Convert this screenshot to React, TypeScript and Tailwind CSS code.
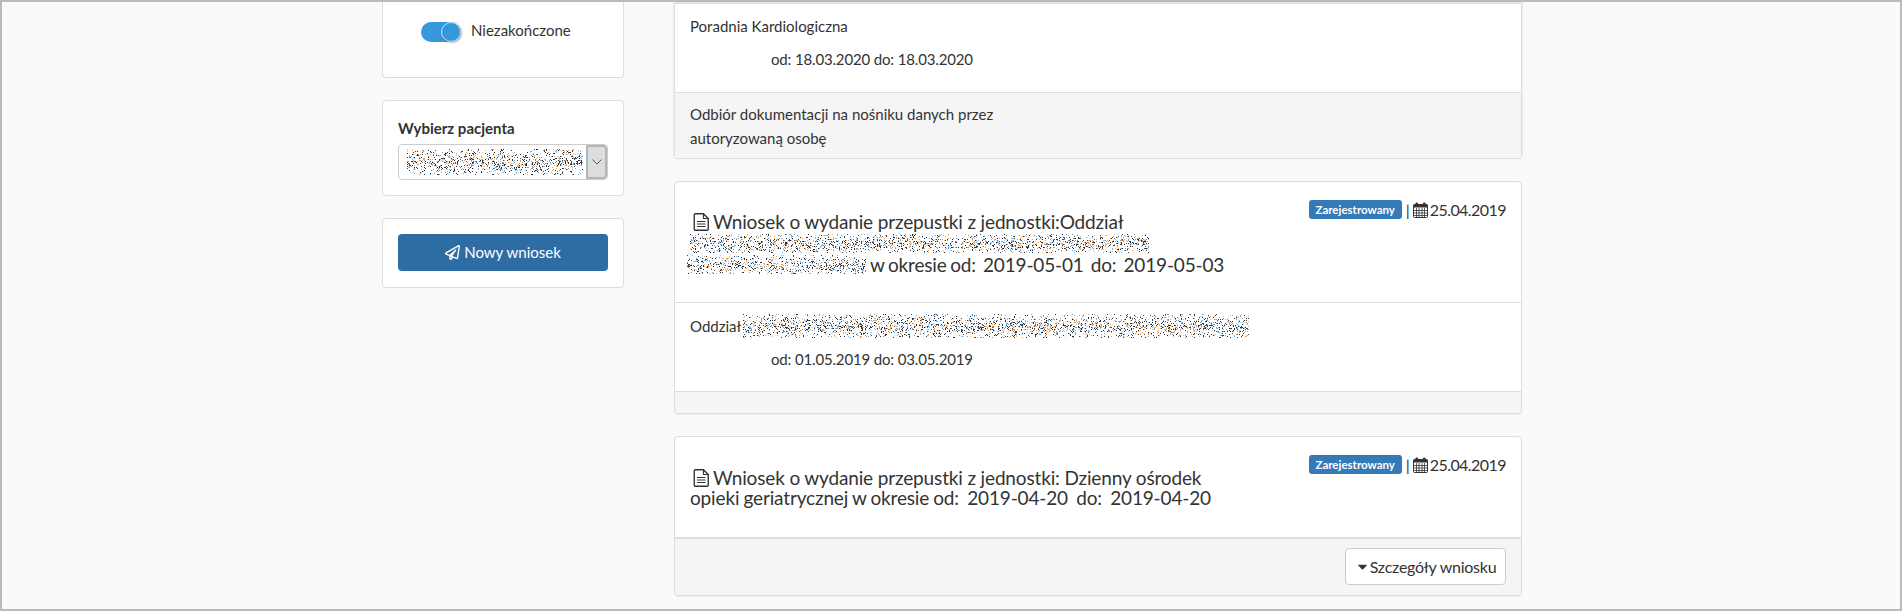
import { FaCaretDown, FaRegPaperPlane } from 'react-icons/fa';

// Speckled block standing in for the anonymised text in the screenshot
function Noise({ w, h, seed, className = '' }: { w: number; h: number; seed: number; className?: string }) {
  const colors = ['#333333', '#333333', '#4a4a4a', '#e8a15a', '#f0b070', '#5aa5e0', '#8fc4ee', '#999999', '#1f2d4d'];
  let s = seed;
  const next = () => {
    s = (s * 16807) % 2147483647;
    return s / 2147483647;
  };
  const dots: { x: number; y: number; c: string }[] = [];
  for (let y = 0; y < h; y++) {
    for (let x = 0; x < w; x++) {
      const dy = Math.abs(y - h / 2) / (h / 2);
      if (next() < 0.34 - dy * 0.24) {
        dots.push({ x, y, c: colors[Math.floor(next() * colors.length)] });
      }
    }
  }
  return (
    <svg width={w} height={h} viewBox={`0 0 ${w} ${h}`} className={`inline-block shrink-0 align-middle ${className}`} shapeRendering="crispEdges">
      {dots.map((d, i) => (
        <rect key={i} x={d.x} y={d.y} width="1" height="1" fill={d.c} />
      ))}
    </svg>
  );
}

function FileIcon() {
  return (
    <svg width="17" height="18" viewBox="0 0 17 18" className="shrink-0" fill="none" stroke="#333">
      <path d="M2.5 0.75H10.5L15.25 5.5V16a1.25 1.25 0 0 1-1.25 1.25H2.5A1.25 1.25 0 0 1 1.25 16V2A1.25 1.25 0 0 1 2.5 0.75Z" strokeWidth="1.4" />
      <path d="M10.5 1V5.5H15" strokeWidth="1.2" />
      <path d="M4 8.5H12.5M4 11H12.5M4 13.5H12.5" strokeWidth="1.2" />
    </svg>
  );
}

function CalendarIcon() {
  return (
    <svg width="15" height="16" viewBox="0 0 15 16" className="shrink-0">
      <rect x="0.5" y="2.5" width="14" height="13" rx="1" fill="none" stroke="#333" />
      <rect x="0.5" y="2.5" width="14" height="3" fill="#333" />
      <path d="M3.5 6v9M6 6v9M9 6v9M11.5 6v9M1 8.5h13M1 11h13M1 13.5h13" stroke="#333" strokeWidth="0.8" />
      <rect x="2.5" y="0.5" width="2.5" height="4" rx="1" fill="#333" />
      <rect x="10" y="0.5" width="2.5" height="4" rx="1" fill="#333" />
    </svg>
  );
}

function Status() {
  return (
    <div className="flex h-[19px] items-center">
      <span className="flex h-[19px] w-[93px] items-center justify-center rounded-[3px] bg-[#337ab7] text-[11.5px] font-bold text-white">
        Zarejestrowany
      </span>
      <span className="ml-1 mr-[3px] text-[16px]">|</span>
      <CalendarIcon />
      <span className="ml-[2px] text-[16px] tracking-[-0.55px]">25.04.2019</span>
    </div>
  );
}

function Title({ children }: { children: React.ReactNode }) {
  return <div className="text-[19px] leading-[21px] tracking-[-0.15px]">{children}</div>;
}

export default function App() {
  return (
    <div className="h-[611px] overflow-hidden border-2 border-[#bbbbbb] bg-[#fafafa] font-['Lato','Liberation_Sans',sans-serif] text-[#333333]">
      <div className="ml-[380px] flex w-[1140px] items-start gap-[50px]">
        {/* Left column */}
        <aside className="flex w-[242px] shrink-0 flex-col gap-[22px]">
          <div className="h-[76px] rounded-b border border-t-0 border-[#dddddd] bg-white pl-[38px] pt-[20px]">
            <div className="flex items-center gap-[10px]">
              <span className="flex h-[20px] w-[40px] items-center justify-end rounded-full bg-[#3498db]">
                <span className="h-[20px] w-[20px] rounded-full border border-[#cfe3f2] bg-[#3498db] shadow-[1px_1px_2px_rgba(0,0,0,0.3)]" />
              </span>
              <span className="-mt-[5px] text-[15px] leading-[16px]">Niezakończone</span>
            </div>
          </div>

          <div className="h-[96px] rounded border border-[#dddddd] bg-white px-[15px] pt-[17px]">
            <div className="text-[15px] font-bold leading-[20px]">Wybierz pacjenta</div>
            <div className="mt-[6px] flex h-[36px] w-[210px] items-stretch overflow-hidden rounded border border-[#cccccc] bg-white">
              <div className="flex flex-1 items-center pl-[8px]">
                <Noise w={176} h={26} seed={4711} />
              </div>
              <div className="flex w-[21px] items-center justify-center rounded-r border-2 border-[#b5b5b5] bg-[#dddddd]">
                <svg width="10" height="6" viewBox="0 0 10 6">
                  <path d="M0.5 0.5L5 5l4.5-4.5" fill="none" stroke="#555" />
                </svg>
              </div>
            </div>
          </div>

          <div className="h-[70px] rounded border border-[#dddddd] bg-white px-[15px] pt-[15px]">
            <button className="flex h-[37px] w-[210px] items-center justify-center gap-[4px] rounded bg-[#2e6da4] text-[15px] text-white">
              <FaRegPaperPlane size={15} />
              Nowy wniosek
            </button>
          </div>
        </aside>

        {/* Requests */}
        <main className="flex w-[848px] shrink-0 flex-col gap-[22px] pt-[1px]">
          <section className="overflow-hidden rounded-b border border-[#dddddd] bg-white shadow-[0_-1px_3px_rgba(0,0,0,0.12)]">
            <div className="h-[88px] px-[15px] pt-[12px] text-[15px]">
              <div className="leading-[20px]">Poradnia Kardiologiczna</div>
              <div className="mt-[13px] pl-[81px] leading-[20px] tracking-[-0.15px]">od: 18.03.2020 do: 18.03.2020</div>
            </div>
            <div className="h-[66px] border-t border-[#dddddd] bg-[#f5f5f5] px-[15px] pt-[9px] text-[15px] leading-[24px]">
              <div>Odbiór dokumentacji na nośniku danych przez</div>
              <div>autoryzowaną osobę</div>
            </div>
          </section>

          <section className="overflow-hidden rounded border border-[#dddddd] bg-white shadow-[0_1px_1px_rgba(0,0,0,0.05)]">
            <div className="flex h-[121px] items-start justify-between border-b border-[#dddddd] pl-[15px] pr-[15px] pt-[18px]">
              <div className="pt-[11px]">
                <Title>
                  <div className="flex items-center gap-[3px] pl-[3px]">
                    <FileIcon />
                    <span>Wniosek o wydanie przepustki z jednostki:Oddział</span>
                  </div>
                  <div className="flex h-[22px] items-center">
                    <Noise w={459} h={19} seed={91} />
                  </div>
                  <div className="-ml-[3px] flex items-center">
                    <Noise w={179} h={19} seed={1234} />
                    <span className="ml-[4px] whitespace-pre [word-spacing:-1.2px]">w okresie od:  2019-05-01  do:  2019-05-03</span>
                  </div>
                </Title>
              </div>
              <Status />
            </div>
            <div className="h-[88px] px-[15px] pt-[11px] text-[15px]">
              <div className="flex h-[24px] items-center">
                <span>Oddział</span>
                <Noise w={506} h={24} seed={777} className="ml-[2px]" />
              </div>
              <div className="mt-[11px] pl-[81px] leading-[20px] tracking-[-0.15px]">od: 01.05.2019 do: 03.05.2019</div>
            </div>
            <div className="h-[22px] border-t border-[#dddddd] bg-[#f5f5f5]" />
          </section>

          <section className="overflow-hidden rounded border border-[#dddddd] bg-white shadow-[0_1px_1px_rgba(0,0,0,0.05)]">
            <div className="flex h-[102px] items-start justify-between border-b-2 border-[#dddddd] px-[15px] pt-[18px]">
              <div className="pt-[12px]">
                <Title>
                  <div className="flex items-center gap-[3px] pl-[3px]">
                    <FileIcon />
                    <span>Wniosek o wydanie przepustki z jednostki: Dzienny ośrodek</span>
                  </div>
                  <div className="-mt-[1px] whitespace-pre [word-spacing:-0.6px]">opieki geriatrycznej w okresie od:  2019-04-20  do:  2019-04-20</div>
                </Title>
              </div>
              <Status />
            </div>
            <div className="flex h-[56px] items-start justify-end bg-[#f5f5f5] px-[15px] pt-[9px]">
              <button className="flex h-[37px] w-[161px] items-center justify-center rounded border border-[#cccccc] bg-white text-[16px] tracking-[-0.25px]">
                <FaCaretDown size={15} />
                Szczegóły wniosku
              </button>
            </div>
          </section>
        </main>
      </div>
    </div>
  );
}
